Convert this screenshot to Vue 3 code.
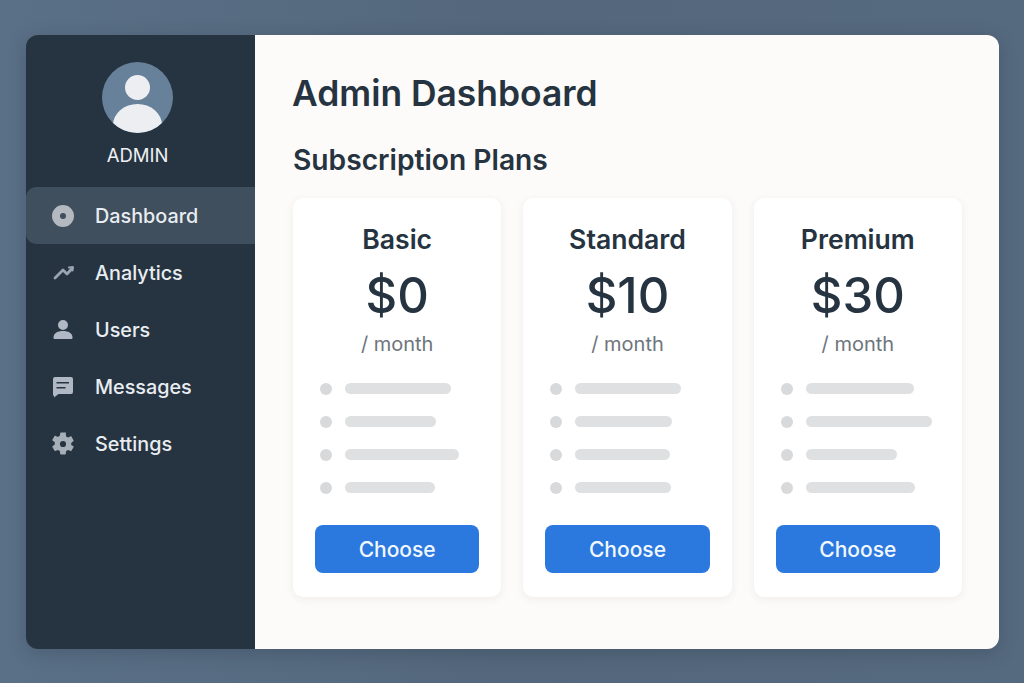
<template>
  <div class="page">
    <div class="window">
      <aside class="sidebar">
        <div class="profile">
          <svg class="avatar" viewBox="0 0 71 71">
            <defs>
              <clipPath id="avatar-clip"><circle cx="35.5" cy="35.5" r="35.5" /></clipPath>
            </defs>
            <circle cx="35.5" cy="35.5" r="35.5" fill="#668199" />
            <g clip-path="url(#avatar-clip)" fill="#eceef2">
              <circle cx="35.5" cy="25.5" r="12.5" />
              <ellipse cx="35.5" cy="63" rx="24.500" ry="21" />
            </g>
          </svg>
          <div class="admin">ADMIN</div>
        </div>
        <nav class="nav">
          <a v-for="item in nav" :key="item.label" class="nav-item" :class="{ active: item.active }">
            <svg class="nav-icon" viewBox="0 0 24 24" v-html="item.icon"></svg>
            <span>{{ item.label }}</span>
          </a>
        </nav>
      </aside>
      <main class="content">
        <h1>Admin Dashboard</h1>
        <h2>Subscription Plans</h2>
        <div class="plans">
          <section v-for="plan in plans" :key="plan.name" class="plan">
            <h3>{{ plan.name }}</h3>
            <div class="price">{{ plan.price }}</div>
            <div class="per">/ month</div>
            <ul>
              <li v-for="(w, i) in plan.bars" :key="i">
                <i class="dot"></i>
                <i class="bar" :style="{ width: w + 'px' }"></i>
              </li>
            </ul>
            <button>Choose</button>
          </section>
        </div>
      </main>
    </div>
  </div>
</template>

<script setup>
const nav = [
  {
    label: 'Dashboard',
    active: true,
    icon: '<path fill="#b4b9c0" fill-rule="evenodd" d="M12 1a11 11 0 1 0 0 22a11 11 0 0 0 0-22zm0 8a3 3 0 1 1 0 6a3 3 0 0 1 0-6z"/>'
  },
  {
    label: 'Analytics',
    icon: '<path fill="none" stroke="#9aa5b1" stroke-width="2.800" stroke-linecap="round" stroke-linejoin="round" d="M4 17l8-8l4 4l5.500-6"/><path fill="none" stroke="#9aa5b1" stroke-width="2" stroke-linecap="round" stroke-linejoin="round" d="M18 6.500l3.800-.5l-.3 3.500"/>'
  },
  {
    label: 'Users',
    icon: '<path fill="#afb8c4" d="M12 2a5 5 0 1 1 0 10a5 5 0 0 1 0-10zM2.500 19.500c0-4.500 4.500-6.500 9.500-6.500s9.500 2 9.500 6.500v.5a1 1 0 0 1-1 1h-17a1 1 0 0 1-1-1z"/>'
  },
  {
    label: 'Messages',
    icon: '<path fill="#afb8c4" d="M4 2h16a2 2 0 0 1 2 2v13a2 2 0 0 1-2 2H7.500L3 22.500V21a2 2 0 0 1-1-2V4a2 2 0 0 1 2-2z"/><path fill="#263441" d="M5.500 7h12.500v1.600H5.500zM5.500 12h9v1.600h-9z"/>'
  },
  {
    label: 'Settings',
    icon: '<path transform="translate(12 12) scale(1.1) translate(-12 -12)" fill="#a6aeb8" fill-rule="evenodd" d="M19.430 12.980c.04-.32.07-.64.07-.98s-.03-.66-.07-.98l2.110-1.650c.19-.15.24-.42.12-.64l-2-3.460c-.12-.22-.39-.3-.61-.22l-2.490 1c-.52-.4-1.080-.73-1.690-.98l-.38-2.650A.49.49 0 0 0 14 1.500h-4c-.25 0-.46.18-.49.42l-.38 2.650c-.61.25-1.170.59-1.690.98l-2.490-1c-.23-.09-.49 0-.61.22l-2 3.460c-.13.22-.07.49.12.64l2.110 1.650c-.04.32-.07.65-.07.98s.03.66.07.98l-2.110 1.650c-.19.15-.24.42-.12.64l2 3.460c.12.22.39.3.61.22l2.490-1c.52.4 1.080.73 1.690.98l.38 2.650c.03.24.24.42.49.42h4c.25 0 .46-.18.49-.42l.38-2.650c.61-.25 1.170-.59 1.690-.98l2.490 1c.23.09.49 0 .61-.22l2-3.460c.12-.22.07-.49-.12-.64zM12 14.800a2.800 2.800 0 1 1 0-5.600a2.800 2.800 0 0 1 0 5.600z"/>'
  }
]

const plans = [
  { name: 'Basic', price: '$0', bars: [106, 91, 114, 90] },
  { name: 'Standard', price: '$10', bars: [106, 97, 95, 96] },
  { name: 'Premium', price: '$30', bars: [108, 126, 91, 109] }
]
</script>

<style>
body {
  background: #566a7f;
}
</style>

<style scoped>
.page {
  height: 683px;
  box-sizing: border-box;
  padding: 35px 25px 34px 26px;
  background: linear-gradient(90deg, #5a7087 0%, #54677c 50%, #566a7f 100%);
  font-family: Inter, "Liberation Sans", sans-serif;
}

.window {
  height: 100%;
  display: flex;
  border-radius: 12px;
  overflow: hidden;
  box-shadow: 0 4px 18px rgba(30, 42, 56, 0.25);
}

.sidebar {
  width: 229px;
  flex-shrink: 0;
  background: #263441;
}

.profile {
  display: flex;
  flex-direction: column;
  align-items: center;
  padding-top: 27px;
  padding-right: 6px;
}

.avatar {
  width: 71px;
  height: 71px;
  display: block;
}

.admin {
  margin-top: 12px;
  font-size: 18.5px;
  line-height: 21px;
  color: #eef1f4;
}

.nav {
  margin-top: 21px;
  display: flex;
  flex-direction: column;
}

.nav-item {
  height: 57px;
  display: flex;
  align-items: center;
  gap: 20px;
  padding-left: 25px;
  font-size: 19.8px;
  font-weight: 450;
  color: #e9edf1;
}

.nav-item.active {
  background: #3f4f5e;
  border-radius: 10px 0 0 10px;
}

.nav-icon {
  width: 24px;
  height: 24px;
  flex-shrink: 0;
}

.content {
  flex: 1;
  background: #fdfbf9;
  padding: 36px 37px 0 38px;
}

h1 {
  margin: 0 0 0 -1px;
  font-size: 35.4px;
  line-height: 46px;
  font-weight: 600;
  color: #263340;
}

h2 {
  margin: 25px 0 0;
  font-size: 28.2px;
  line-height: 36px;
  font-weight: 600;
  color: #263340;
}

.plans {
  margin-top: 20px;
  display: grid;
  grid-template-columns: repeat(3, 1fr);
  gap: 22px;
}

.plan {
  height: 399px;
  box-sizing: border-box;
  padding: 24px 22px 0;
  background: #fff;
  border-radius: 10px;
  box-shadow: 0 2px 8px rgba(40, 50, 60, 0.07);
  display: flex;
  flex-direction: column;
}

h3 {
  margin: 0;
  text-align: center;
  font-size: 26.6px;
  line-height: 34px;
  font-weight: 600;
  color: #263340;
}

.price {
  margin-top: 11px;
  text-align: center;
  font-size: 49px;
  line-height: 58px;
  font-weight: 550;
  color: #263340;
}

.per {
  margin-top: 6px;
  text-align: center;
  font-size: 20px;
  line-height: 26px;
  color: #6e757c;
}

ul {
  list-style: none;
  margin: 15px 0 0;
  padding: 0 0 0 5px;
}

li {
  height: 33px;
  display: flex;
  align-items: center;
  gap: 13px;
}

.dot {
  width: 12px;
  height: 12px;
  border-radius: 50%;
  background: #d8d9da;
}

.bar {
  height: 11px;
  border-radius: 6px;
  background: #dfe0e1;
}

button {
  margin-top: 21px;
  height: 48px;
  border: none;
  border-radius: 8px;
  background: #2b78de;
  color: #f2f8ff;
  font-family: inherit;
  font-size: 21px;
  font-weight: 500;
}
</style>
